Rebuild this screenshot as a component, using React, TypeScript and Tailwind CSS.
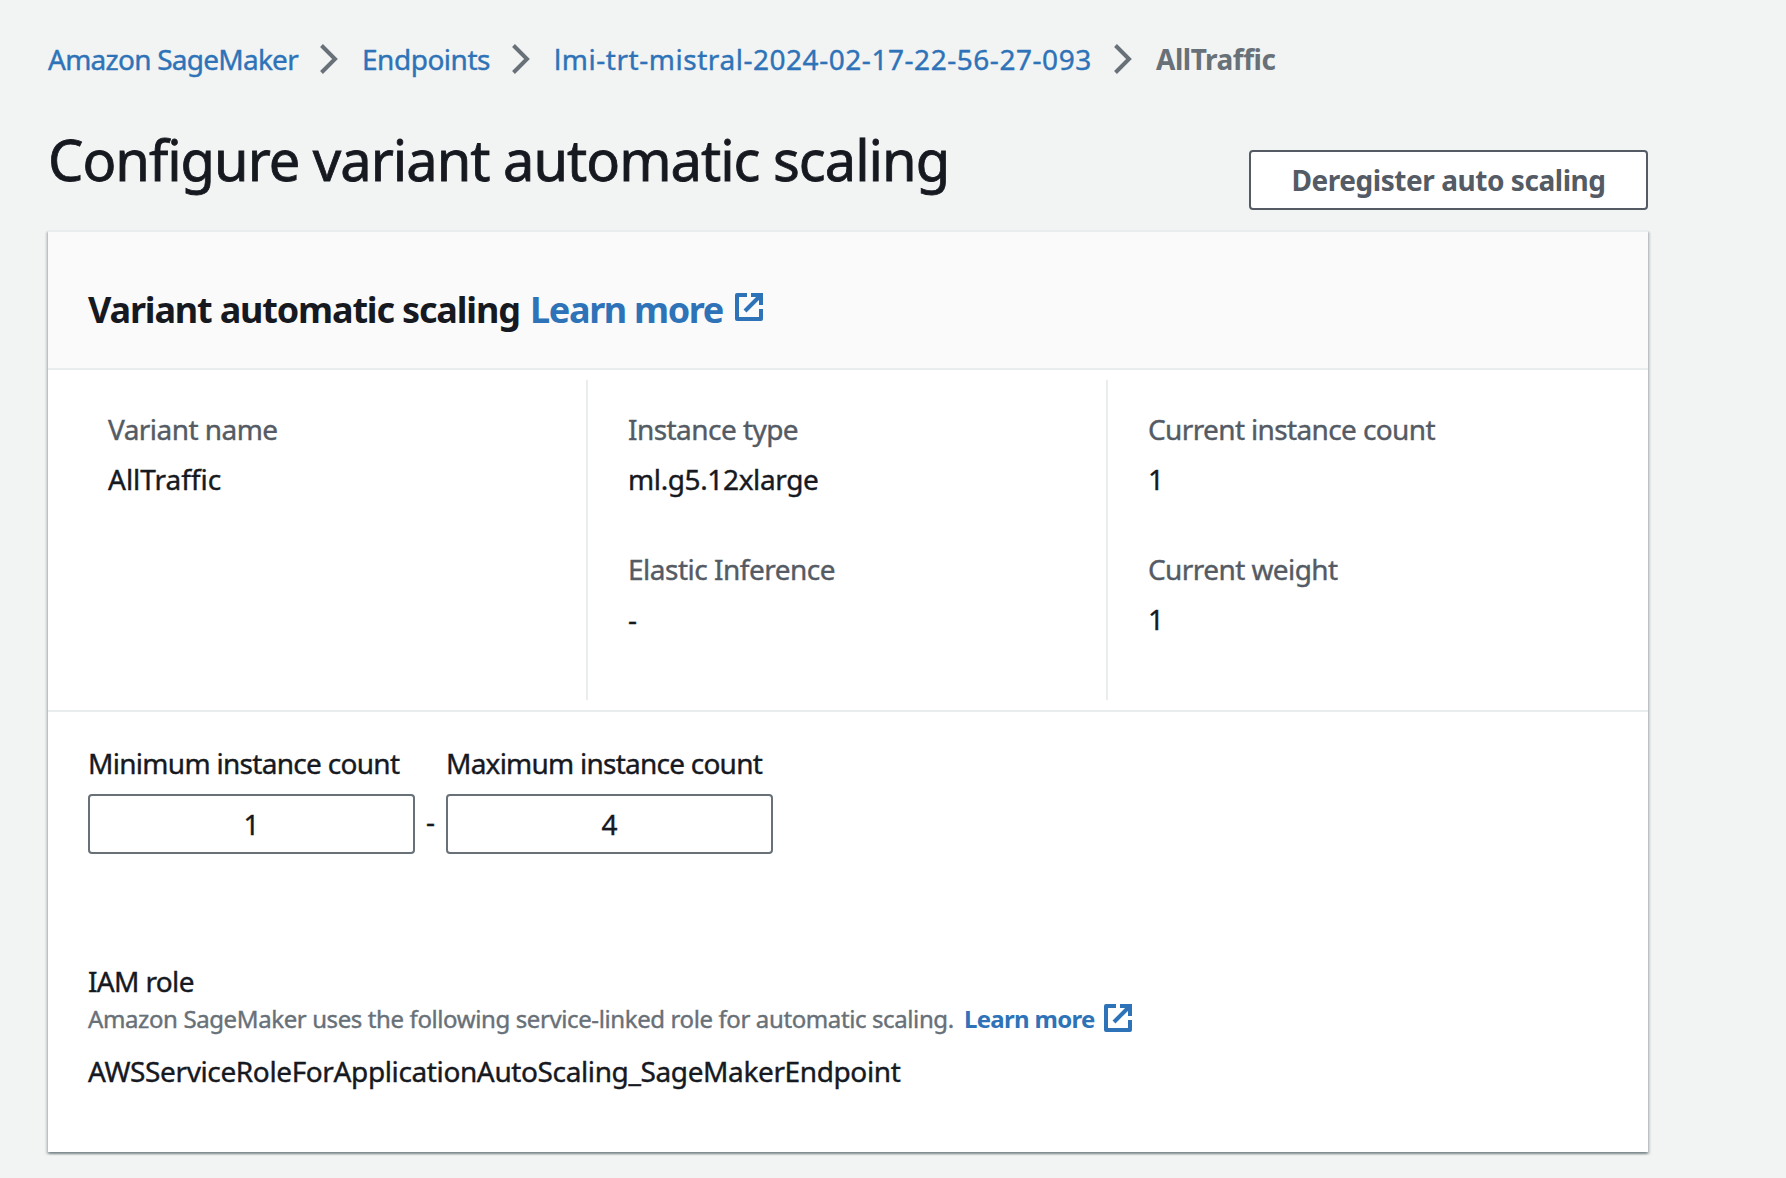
import type { ReactNode } from "react";

function Chevron() {
  return (
    <svg className="mr-6 h-[30px] w-[18px] shrink-0 text-[#687078]" viewBox="0 0 18 30" fill="none" stroke="currentColor" strokeWidth="4">
      <path d="M1.5 1.5 15 15 1.5 28.5" />
    </svg>
  );
}

function ExternalIcon({ className }: { className: string }) {
  return (
    <svg className={`size-7 shrink-0 ${className}`} viewBox="0 0 28 28" fill="none" stroke="currentColor" strokeWidth="4">
      <path d="M12 2H2V26H26V16" strokeLinejoin="round" />
      <path d="M16 2H26V12" />
      <path d="M25 3 10 18" />
    </svg>
  );
}

function Field({ label, value, labelClass, valueClass = "" }: { label: string; value: string; labelClass: string; valueClass?: string }) {
  return (
    <div className="flex flex-col items-start gap-1.5">
      <dt className={`text-[#545b64] ${labelClass}`}>{label}</dt>
      <dd className={valueClass}>{value}</dd>
    </div>
  );
}

function Column({ children, divider = true }: { children: ReactNode; divider?: boolean }) {
  return (
    <dl className={`flex w-[520px] flex-col gap-[46px] pt-[27px] pl-10 ${divider ? "border-r-2 border-[#eaeded]" : ""}`}>
      {children}
    </dl>
  );
}

function CountInput({ label, value, labelClass }: { label: string; value: string; labelClass: string }) {
  return (
    <label className="flex w-[327px] flex-col gap-[9px]">
      <span className={labelClass}>{label}</span>
      <input
        defaultValue={value}
        className="h-[60px] w-full rounded-[4px] border-2 border-[#687078] bg-white text-center"
      />
    </label>
  );
}

export default function App() {
  return (
    <main className="min-h-[1178px] bg-[#f2f3f3] pt-[37px] pl-12 font-['Noto_Sans',sans-serif] text-[28px] leading-[44px] whitespace-nowrap text-[#16191f] [-webkit-text-stroke:0.4px]">
      <div className="w-[1600px]">
        <nav className="flex items-center text-[#2e73b8]">
          <a className="w-[272px] tracking-[-0.75px]">Amazon SageMaker</a>
          <Chevron />
          <a className="w-[150px] tracking-[-0.48px]">Endpoints</a>
          <Chevron />
          <a className="w-[560px] tracking-[0.54px]">lmi-trt-mistral-2024-02-17-22-56-27-093</a>
          <Chevron />
          <span className="font-bold tracking-[-0.45px] text-[#687078] [-webkit-text-stroke:0px]">AllTraffic</span>
        </nav>

        <header className="mt-11 flex h-[85px] items-start justify-between">
          <h1 className="text-[56px] leading-[68px] tracking-[-1px] [-webkit-text-stroke:0.8px]">Configure variant automatic scaling</h1>
          <button className="mt-[25px] flex h-[60px] w-[399px] items-center justify-center rounded-[4px] border-2 border-[#545b64] bg-white font-bold tracking-[-0.45px] text-[#545b64] [-webkit-text-stroke:0px]">
            Deregister auto scaling
          </button>
        </header>

        <section className="mt-5 h-[922px] border-t-2 border-[#eaeded] bg-white shadow-[0_2px_2px_0_rgba(0,28,36,0.3),2px_2px_2px_0_rgba(0,28,36,0.15),-2px_2px_2px_0_rgba(0,28,36,0.15)]">
          <div className="flex h-[138px] items-start border-b-2 border-[#eaeded] bg-[#fafafa] pt-14 pl-10">
            <h2 className="flex items-start text-[36px] font-bold [-webkit-text-stroke:0px]">
              <span className="w-[442px] tracking-[-1.17px]">Variant automatic scaling</span>
              <a className="flex items-start text-[#2e73b8]">
                <span className="w-[205px] tracking-[-1.35px]">Learn more</span>
                <ExternalIcon className="mt-[5px]" />
              </a>
            </h2>
          </div>

          <div className="flex h-[342px] items-stretch border-b-2 border-[#eaeded] px-5 py-2.5">
            <Column>
              <Field label="Variant name" value="AllTraffic" labelClass="tracking-[-0.55px]" />
            </Column>
            <Column>
              <Field label="Instance type" value="ml.g5.12xlarge" labelClass="tracking-[-0.55px]" valueClass="tracking-[-0.38px]" />
              <Field label="Elastic Inference" value="-" labelClass="tracking-[-0.5px]" />
            </Column>
            <Column divider={false}>
              <Field label="Current instance count" value="1" labelClass="tracking-[-0.63px]" />
              <Field label="Current weight" value="1" labelClass="tracking-[-0.58px]" />
            </Column>
          </div>

          <div className="px-10 pt-[29px]">
            <div className="flex items-end">
              <CountInput label="Minimum instance count" value="1" labelClass="tracking-[-0.7px]" />
              <span className="w-[31px] pb-[11px] text-center">-</span>
              <CountInput label="Maximum instance count" value="4" labelClass="tracking-[-0.76px]" />
            </div>

            <h3 className="mt-[105px] tracking-[-0.65px]">IAM role</h3>
            <div className="flex h-8 items-center text-[24px] leading-8">
              <p className="w-[876px] tracking-[-0.39px] text-[#687078]">
                Amazon SageMaker uses the following service-linked role for automatic scaling.
              </p>
              <a className="flex items-center font-bold text-[#2e73b8] [-webkit-text-stroke:0px]">
                <span className="w-[140px] tracking-[-0.7px]">Learn more</span>
                <ExternalIcon className="-mt-0.5" />
              </a>
            </div>
            <p className="mt-3.5 tracking-[-0.38px]">AWSServiceRoleForApplicationAutoScaling_SageMakerEndpoint</p>
          </div>
        </section>
      </div>
    </main>
  );
}
